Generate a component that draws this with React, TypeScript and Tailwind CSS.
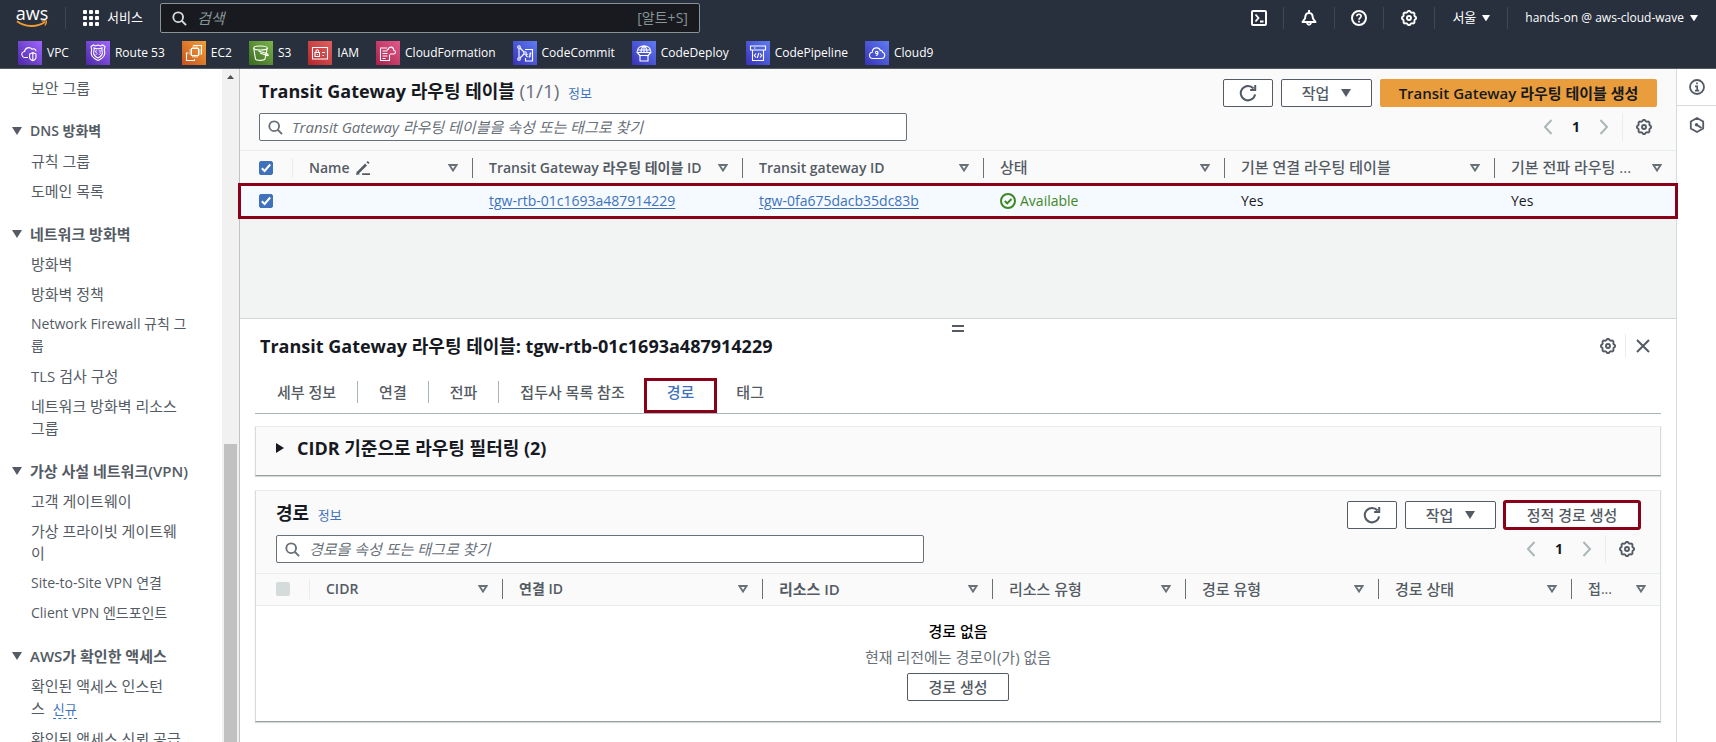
import { useState } from "react";
import type { ReactNode } from "react";

const font = "font-['Open_Sans','Noto_Sans_CJK_KR',sans-serif]";

/* Labels that are mostly Hangul are set one pixel larger than Latin ones. */
function textSize(text: string) {
  const hangul = (text.match(/[가-힣]/g) ?? []).length;
  return hangul / text.length > 0.44 ? "text-[15px]" : "text-sm";
}

function scallop(cx: number, cy: number, r: number, depth: number, teeth: number) {
  const points: string[] = [];
  for (let i = 0; i < 96; i++) {
    const a = (i / 96) * Math.PI * 2;
    const wave = Math.max(-0.7, Math.min(0.7, Math.cos(teeth * a))) / 0.7;
    const rr = r + depth * wave;
    points.push(`${(cx + rr * Math.cos(a)).toFixed(2)} ${(cy + rr * Math.sin(a)).toFixed(2)}`);
  }
  return `M${points.join("L")}Z`;
}
const gearPath = scallop(8, 8, 6.5, 0.55, 8);

function Glyph({ children, className = "size-4" }: { children: ReactNode; className?: string }) {
  return (
    <svg viewBox="0 0 16 16" className={className} fill="none" stroke="currentColor" strokeWidth="2" aria-hidden="true">
      {children}
    </svg>
  );
}
const Gear = () => (
  <Glyph>
    <path d={gearPath} strokeLinejoin="round" strokeWidth="1.9" />
    <circle cx="8" cy="8" r="2" strokeWidth="1.9" />
  </Glyph>
);
const Refresh = () => (
  <Glyph className="size-[18px]">
    <path d="M14.3 9.2A6.4 6.4 0 1 1 12.900 4" strokeWidth="1.8" />
    <path d="M14.400.8v4.600H9.900" strokeWidth="1.8" />
  </Glyph>
);
const Magnifier = ({ className }: { className?: string }) => (
  <Glyph className={className}>
    <circle cx="6.600" cy="6.600" r="5.200" />
    <path d="M10.400 10.400 15 15" />
  </Glyph>
);
const CaretDown = ({ className = "w-2.5" }: { className?: string }) => (
  <svg viewBox="0 0 10 8" className={className} fill="currentColor" aria-hidden="true">
    <path d="M0 0h10L5 8Z" />
  </svg>
);
const SortMark = () => (
  <svg viewBox="0 0 10 8" className="h-2 w-2.5" fill="none" stroke="currentColor" strokeWidth="1.800" aria-hidden="true">
    <path d="M1.400 1h7.200L5 6.600Z" />
  </svg>
);

type Service = { name: string; tile: string; art: ReactNode };
const services: Service[] = [
  {
    name: "VPC",
    tile: "from-[#4d27a8] to-[#a166ff]",
    art: (
      <>
        <path d="M10 16.500H7.200A3 3 0 0 1 6.600 10.500 4.200 4.200 0 0 1 14 8.200 2.600 2.600 0 0 1 18 10.200" />
        <path d="M14.800 11.500 18 13v3.500c0 1.700-1.600 2.600-3.200 3.200-1.600-.6-3.200-1.500-3.200-3.200V13ZM14.800 12v7" />
      </>
    ),
  },
  {
    name: "Route 53",
    tile: "from-[#4d27a8] to-[#a166ff]",
    art: (
      <>
        <path d="M5 5.500 7.500 4 9.500 5 12 4l2.500 1 2-1L19 5.500 18.300 9c2 5-.8 8-6.300 10.500C6.500 17 3.700 14 5.700 9Z" />
        <path d="M8 7c2 .8 6 .8 8 0-.4 2-.4 2 .3 4 .7 3-1.300 4.500-4.300 6-3-1.500-5-3-4.300-6 .7-2 .7-2 .3-4Z" />
        <path d="M11.200 9.800H9.600v1.500c2 0 2 2.200 0 2.200M12.800 9.800h1.800l-1 1.400c1.500.3 1 2.400-.9 2.300" strokeWidth=".8" />
      </>
    ),
  },
  {
    name: "EC2",
    tile: "from-[#c8511b] to-[#f0a03a]",
    art: (
      <>
        <path d="M9.500 7.500h7v7h-7ZM11 7.500v-2M13 7.500v-2M15 7.500v-2M11 16.500v-2M13 16.500v-2M15 16.500v-2M9.500 9h-2M9.500 11h-2M9.500 13h-2M18.500 9h-2M18.500 11h-2M18.500 13h-2" />
        <path d="M11 4.500h8.500v9M6.500 12h-2v7.500h8V18" />
      </>
    ),
  },
  {
    name: "S3",
    tile: "from-[#3b6b22] to-[#7bb34a]",
    art: (
      <>
        <ellipse cx="11.500" cy="7" rx="6.800" ry="2" />
        <path d="M4.700 7l1.800 11c.8 1.800 8.500 1.800 9.500 0L18.300 7M11 12l7 2.500c2 .5 1.500-1-.3-2L9.500 10" />
      </>
    ),
  },
  {
    name: "IAM",
    tile: "from-[#b3242c] to-[#e2605f]",
    art: (
      <>
        <path d="M4.500 6.500h15v11.500h-15ZM7 11.500h4.500v4H7ZM8 11.500V10c0-1.600 2.500-1.600 2.500 0v1.500M14 11.500h3M14.500 14.500H16" />
        <path d="M9.300 13v1" />
      </>
    ),
  },
  {
    name: "CloudFormation",
    tile: "from-[#a8224d] to-[#e4588a]",
    art: (
      <>
        <path d="M13.500 13.500v6h-9V7H11M6.500 10h3.500M6.500 12.500h5M6.500 15h5M6.500 17.500h3" />
        <path d="M14 13h3.500c2.500-.2 2.500-3.500.3-3.700C17.500 5.500 13 5 12 8.500c-1 .2-1.500 1-1 2" />
      </>
    ),
  },
  {
    name: "CodeCommit",
    tile: "from-[#3a30b8] to-[#5f7bf2]",
    art: (
      <>
        <circle cx="6" cy="6" r="1.300" />
        <circle cx="6" cy="18" r="1.300" />
        <circle cx="12" cy="12" r="1.300" />
        <path d="M6 7.500v9M7 7l4 4M11 13l-4 4M12 8.500h7.500V20h-7v-3M14.500 13 13 14.500l1.500 1.500M17 12v4M18 11.500l-2 5" />
      </>
    ),
  },
  {
    name: "CodeDeploy",
    tile: "from-[#3a30b8] to-[#5f7bf2]",
    art: (
      <>
        <path d="M5 11.500C5 2.500 19 2.500 19 11.500ZM12 5v6.500M9 11.500C9 8 10 6 12 5c2 1 3 3 3 6.500M5.500 9h13M5.500 12l3 3M18.500 12l-3 3" />
        <path d="M8 14.500h8V20H8Z" />
      </>
    ),
  },
  {
    name: "CodePipeline",
    tile: "from-[#3a30b8] to-[#5f7bf2]",
    art: (
      <>
        <path d="M4.500 5h15v4h-15ZM6.500 9v10.500h11V9M8 7h1.500" />
        <path d="M10 12.500 8.300 14.500l1.700 2M14 12.500l1.700 2-1.700 2M12.800 12l-1.600 5" />
      </>
    ),
  },
  {
    name: "Cloud9",
    tile: "from-[#3a30b8] to-[#5f7bf2]",
    art: (
      <>
        <path d="M8 17.500c-4.500 0-4.500-6-.8-6.200C7.500 6 14 5.500 15.300 9.500c1.300-.4 2.200.5 2.300 1.800 3 .5 2.800 6-.6 6.200Z" />
        <path d="M13 11.500c0-1.500-2.500-1.500-2.500 0s2.500 1.500 2.500 0c0 2 0 3-2.200 3" />
      </>
    ),
  },
];

const Divider = () => <span className="h-[22px] w-px bg-[#414750]" />;

function Header() {
  return (
    <header className="flex h-[69px] flex-none flex-col border-b border-[#545b64] bg-[#282f3d] text-white">
      <div className="flex h-9 items-center">
        <a href="#home" className="ml-4 flex w-8 flex-col items-center" aria-label="aws home">
          <span className="text-lg leading-[11px] font-medium">aws</span>
          <svg viewBox="0 0 32 9" className="h-[9px] w-8" fill="none" stroke="#f29b33" strokeWidth="2" aria-hidden="true">
            <path d="M1 2.200c8 6 20 6.400 28 .8" />
            <path d="M25.500 2.200c2-.6 4-.7 4.800-.2.400 1-.1 2.600-1.300 4.500" strokeWidth="1.400" />
          </svg>
        </a>
        <span className="ml-[17px] flex">
          <Divider />
        </span>
        <button type="button" className="ml-[17px] flex items-center gap-2 text-[13px]">
          <svg viewBox="0 0 16 16" className="size-4" fill="currentColor" aria-hidden="true">
            {[0, 6, 12].map((y) => [0, 6, 12].map((x) => <rect key={`${x}-${y}`} x={x} y={y} width="4" height="4" rx="1" />))}
          </svg>
          서비스
        </button>
        <label className="ml-[17px] flex h-[30px] w-[540px] items-center gap-2.5 rounded-[2px] border border-[#879596] bg-[#191a1f] px-[11px]">
          <Magnifier className="size-[15px] text-[#d5dbdb]" />
          <input
            type="search"
            aria-label="검색"
            placeholder="검색"
            className="min-w-0 flex-1 bg-transparent text-[15px] italic outline-none placeholder:text-[#879596]"
          />
          <span className="text-sm text-[#879596]">[알트+S]</span>
        </label>
        <div className="ml-auto flex items-center">
          <button type="button" aria-label="CloudShell" className="flex w-12 justify-center">
            <Glyph>
              <rect x="1" y="1" width="14" height="14" rx="1" />
              <path d="m4.500 4.500 3 3.500-3 3.500M9 11.500h3.500" strokeWidth="1.800" />
            </Glyph>
          </button>
          <Divider />
          <button type="button" aria-label="알림" className="flex w-[50px] justify-center">
            <Glyph>
              <path d="M1.500 12h13L12 8.500c-.5-4-1-5.500-4-5.500S4.500 4.500 4 8.500ZM8 0v3" strokeLinejoin="round" />
              <path d="M6 12.500c.3 3 3.700 3 4 0" strokeWidth="1.800" />
            </Glyph>
          </button>
          <Divider />
          <button type="button" aria-label="도움말" className="flex w-12 justify-center">
            <Glyph>
              <circle cx="8" cy="8" r="7" />
              <path d="M5.800 6.300C6 3.500 10.300 3.700 10.100 6.300 10 7.800 8 7.900 8 9.700M8 10.800v1.700" strokeWidth="1.700" />
            </Glyph>
          </button>
          <Divider />
          <button type="button" aria-label="설정" className="flex w-[50px] justify-center">
            <Gear />
          </button>
          <Divider />
          <button type="button" className="flex items-center gap-1.5 px-[17px] text-[13px]">
            서울 <CaretDown className="w-2" />
          </button>
          <Divider />
          <button type="button" className="flex items-center gap-1.5 pr-[18px] pl-[17px] text-xs font-medium">
            hands-on @ aws-cloud-wave <CaretDown className="w-2" />
          </button>
        </div>
      </div>
      <nav aria-label="즐겨찾기" className="flex items-center gap-[17px] px-[18px] pt-[5px]">
        {services.map((s) => (
          <a key={s.name} href={`#${s.name}`} className="flex items-center gap-[5px] text-xs font-medium">
            <span className={`size-6 bg-gradient-to-tr ${s.tile}`}>
              <svg viewBox="0 0 24 24" className="size-6" fill="none" stroke="white" strokeWidth="1.100" aria-hidden="true">
                {s.art}
              </svg>
            </span>
            {s.name}
          </a>
        ))}
      </nav>
    </header>
  );
}

type Group = { title?: string; items: string[][] };
const groups: Group[] = [
  { items: [["보안 그룹"]] },
  { title: "DNS 방화벽", items: [["규칙 그룹"], ["도메인 목록"]] },
  {
    title: "네트워크 방화벽",
    items: [["방화벽"], ["방화벽 정책"], ["Network Firewall 규칙 그", "룹"], ["TLS 검사 구성"], ["네트워크 방화벽 리소스", "그룹"]],
  },
  {
    title: "가상 사설 네트워크(VPN)",
    items: [["고객 게이트웨이"], ["가상 프라이빗 게이트웨", "이"], ["Site-to-Site VPN 연결"], ["Client VPN 엔드포인트"]],
  },
  { title: "AWS가 확인한 액세스", items: [["확인된 액세스 인스턴", "스"], ["확인된 액세스 신뢰 공급"]] },
];

function Sidebar() {
  return (
    <aside className="flex w-[239px] flex-none overflow-hidden bg-white text-[#545b64]">
      <nav aria-label="VPC" className="flex flex-1 flex-col gap-[13px] overflow-hidden pt-2">
        {groups.map((g, i) => (
          <section key={i} className="whitespace-nowrap">
            {g.title && (
              <h2 className={`mb-2 flex items-center gap-2 pl-3 leading-[22px]! font-semibold ${textSize(g.title)}`}>
                <CaretDown /> {g.title}
              </h2>
            )}
            <ul className="flex flex-col">
              {g.items.map((lines) => (
                <li key={lines[0]} className={`mb-2 pl-[31px] leading-[22px]! ${textSize(lines[0])}`}>
                  <a href="#item">
                    {lines.map((l, n) => (
                      <span key={n}>
                        {n > 0 && <br />}
                        {l}
                      </span>
                    ))}
                  </a>
                  {lines[1] === "스" && (
                    <a href="#new" className="ml-2 border-b border-dashed border-[#4072bc] text-[13px] text-[#4072bc]">
                      신규
                    </a>
                  )}
                </li>
              ))}
            </ul>
          </section>
        ))}
      </nav>
      <div className="flex w-[17px] flex-none flex-col items-center bg-[#f1f1f1]">
        <svg viewBox="0 0 7 4" className="mt-1.5 h-1 w-[7px]" fill="#505050" aria-hidden="true">
          <path d="M0 4h7L3.500 0Z" />
        </svg>
        <div className="mt-[365px] w-[13px] flex-1 bg-[#c1c1c1]" />
      </div>
    </aside>
  );
}

function Tick({ label, disabled = false }: { label: string; disabled?: boolean }) {
  const [on, setOn] = useState(!disabled);
  return (
    <label className="relative block size-[14px]">
      <input
        type="checkbox"
        aria-label={label}
        checked={on}
        disabled={disabled}
        onChange={(e) => setOn(e.target.checked)}
        className="block size-[14px] appearance-none rounded-[2px] border border-[#879596] bg-white checked:border-[#4072bc] checked:bg-[#4072bc] disabled:border-[#d5dbdb] disabled:bg-[#d5dbdb]"
      />
      {on && (
        <svg viewBox="0 0 14 14" className="pointer-events-none absolute inset-0 size-[14px]" fill="none" stroke="white" strokeWidth="2" aria-hidden="true">
          <path d="M2.800 7.300 5.600 10 11.200 3.500" />
        </svg>
      )}
    </label>
  );
}

function Button({ children, className = "px-5", label }: { children: ReactNode; className?: string; label?: string }) {
  return (
    <button
      type="button"
      aria-label={label}
      className={`flex h-7 items-center justify-center rounded-[2px] border border-[#545b64] bg-white text-[15px] font-medium text-[#545b64] ${className}`}
    >
      {children}
    </button>
  );
}

const Actions = () => (
  <>
    <Button label="새로 고침" className="w-[50px]">
      <Refresh />
    </Button>
    <Button className="w-[91px] gap-3">
      작업 <CaretDown />
    </Button>
  </>
);

function SearchBox({ text }: { text: string }) {
  return (
    <label className="flex h-7 w-[648px] items-center gap-[9px] rounded-[2px] border border-[#687078] bg-white px-2">
      <Magnifier className="size-[15px] flex-none text-[#687078]" />
      <input
        type="search"
        aria-label={text}
        placeholder={text}
        className="min-w-0 flex-1 bg-transparent text-[15px] italic outline-none placeholder:text-[#687078]"
      />
    </label>
  );
}

function Pager() {
  return (
    <div className="flex h-7 items-center text-[#545b64]">
      <button type="button" aria-label="이전 페이지" className="text-[#aab7b8]">
        <Glyph>
          <path d="M11.500 1 5 8l6.500 7" />
        </Glyph>
      </button>
      <button type="button" className="w-10 text-sm font-bold text-[#16191f]">
        1
      </button>
      <button type="button" aria-label="다음 페이지" className="text-[#aab7b8]">
        <Glyph>
          <path d="M4.500 1 11 8l-6.500 7" />
        </Glyph>
      </button>
      <span className="ml-[10px] h-7 w-px bg-[#eaeded]" />
      <button type="button" aria-label="기본 설정" className="mr-[5px] ml-[13px]">
        <Gear />
      </button>
    </div>
  );
}

function HeadCell({ text, icon, last = false }: { text: string; icon?: ReactNode; last?: boolean }) {
  const weight = /[A-Za-z]/.test(text) ? "font-semibold" : "font-medium";
  return (
    <th scope="col" className={`p-0 text-left whitespace-nowrap ${weight} ${textSize(text)}`}>
      <div className={`flex h-5 items-center gap-2 pr-[14px] pl-4 ${last ? "" : "border-r border-[#687078]"}`}>
        <span className="flex flex-1 items-center gap-1.5">
          {text} {icon}
        </span>
        <button type="button" aria-label="정렬" className="text-[#687078]">
          <SortMark />
        </button>
      </div>
    </th>
  );
}

const Pencil = () => (
  <svg viewBox="0 0 16 16" className="size-[14px]" fill="none" stroke="currentColor" strokeWidth="2" aria-hidden="true">
    <path d="M2 13.500 11.500 4M13 2.500 14.500 1" strokeWidth="3" />
    <path d="M7 15h9" />
    <path d="M0 16 1 11.500l3.500 3.500Z" fill="currentColor" stroke="none" />
  </svg>
);

function TopPanel() {
  return (
    <section className="flex h-[250px] flex-none flex-col border-b border-[#d1d5d5] bg-[#f2f3f3]">
      <div className="border-b border-[#eaeded] bg-[#fafafa] px-[19px] pb-[9px]">
        <div className="flex items-start justify-between">
          <h1 className="pt-2.5 text-lg leading-6 font-bold text-[#16191f]">
            Transit Gateway 라우팅 테이블 <span className="text-[19px] font-normal text-[#687078]">(1/1)</span>{" "}
            <a href="#info" className="ml-1 text-[13px] font-normal text-[#4072bc]">
              정보
            </a>
          </h1>
          <div className="flex gap-2 pt-2.5">
            <Actions />
            <button type="button" className="h-7 w-[277px] rounded-[2px] bg-[#e99d3c] text-[15px] font-semibold text-[#16191f]">
              Transit Gateway 라우팅 테이블 생성
            </button>
          </div>
        </div>
        <div className="mt-1.5 flex justify-between">
          <SearchBox text="Transit Gateway 라우팅 테이블을 속성 또는 태그로 찾기" />
          <Pager />
        </div>
      </div>
      <table className="w-full table-fixed border-collapse text-sm">
        <colgroup>
          <col className="w-[53px]" />
          <col className="w-[180px]" />
          <col className="w-[270px]" />
          <col className="w-[241px]" />
          <col className="w-[241px]" />
          <col className="w-[270px]" />
          <col />
        </colgroup>
        <thead className="bg-[#fafafa] text-[#545b64]">
          <tr className="h-[34px]">
            <th scope="col" className="p-0">
              <div className="flex h-5 items-center border-r border-[#eaeded] pl-[19px]">
                <Tick label="모두 선택" />
              </div>
            </th>
            <HeadCell text="Name" icon={<Pencil />} />
            <HeadCell text="Transit Gateway 라우팅 테이블 ID" />
            <HeadCell text="Transit gateway ID" />
            <HeadCell text="상태" />
            <HeadCell text="기본 연결 라우팅 테이블" />
            <HeadCell text="기본 전파 라우팅 ..." last />
          </tr>
        </thead>
        <tbody>
          <tr className="relative z-10 h-8 bg-[#f4faff] outline-3 -outline-offset-1 outline-[#8a0019]">
            <td className="p-0 pl-[19px]">
              <Tick label="tgw-rtb-01c1693a487914229 선택" />
            </td>
            <td />
            <td className="p-0 pl-4">
              <a href="#rtb" className="text-[#4072bc] underline underline-offset-2">
                tgw-rtb-01c1693a487914229
              </a>
            </td>
            <td className="p-0 pl-4">
              <a href="#tgw" className="text-[#4072bc] underline underline-offset-2">
                tgw-0fa675dacb35dc83b
              </a>
            </td>
            <td className="p-0 pl-4">
              <span className="flex items-center gap-1 text-[#3f8624]">
                <Glyph>
                  <circle cx="8" cy="8" r="7" />
                  <path d="m4.800 8 2.400 2.400L11.500 6" />
                </Glyph>
                Available
              </span>
            </td>
            <td className="p-0 pl-4 text-[#16191f]">Yes</td>
            <td className="p-0 pl-4 text-[#16191f]">Yes</td>
          </tr>
        </tbody>
      </table>
    </section>
  );
}

const tabs = ["세부 정보", "연결", "전파", "접두사 목록 참조", "경로", "태그"];
const routeHeads = ["CIDR", "연결 ID", "리소스 ID", "리소스 유형", "경로 유형", "경로 상태"];
const card = "border border-t-[#eaeded] border-r-[#d5dbdb] border-b-[#95a0a1] border-l-[#d5dbdb] shadow-[0_1px_1px_#d5dbdb]";

function SplitPanel() {
  return (
    <section className="min-h-0 flex-1 bg-white px-[15px]">
      <button type="button" aria-label="패널 크기 조정" className="mx-auto mt-1.5 flex h-[7px] w-3 flex-col justify-between">
        <span className="h-[2px] w-full bg-[#545b64]" />
        <span className="h-[2px] w-full bg-[#545b64]" />
      </button>
      <div className="mt-[2px] flex items-center justify-between pr-2.5 pl-[5px]">
        <h2 className="text-lg leading-6 font-bold text-[#16191f]">Transit Gateway 라우팅 테이블: tgw-rtb-01c1693a487914229</h2>
        <div className="flex items-center text-[#545b64]">
          <button type="button" aria-label="패널 설정">
            <Gear />
          </button>
          <span className="ml-[9px] h-6 w-px bg-[#eaeded]" />
          <button type="button" aria-label="닫기" className="ml-[9px]">
            <Glyph>
              <path d="m2 2 12 12M14 2 2 14" />
            </Glyph>
          </button>
        </div>
      </div>
      <div role="tablist" className="mt-[19px] flex h-[37px] border-b border-[#aab7b8] pl-px text-[15px] font-medium text-[#545b64]">
        {tabs.map((t, i) => (
          <button
            key={t}
            type="button"
            role="tab"
            aria-selected={t === "경로"}
            className={
              t === "경로"
                ? "mt-[3px] h-[31px] px-[21px] pb-1.5 text-[#4072bc] outline-3 -outline-offset-1 outline-[#8a0019]"
                : `my-1 h-[22px] px-[21px] leading-[22px] ${i < 3 ? "border-r border-[#aab7b8]" : ""}`
            }
          >
            {t}
          </button>
        ))}
      </div>
      <div className={`mt-3 flex h-[50px] items-center gap-[13px] bg-[#fafafa] pb-1.5 pl-5 text-[#16191f] ${card}`}>
        <svg viewBox="0 0 8 10" className="h-2.5 w-2" fill="currentColor" aria-hidden="true">
          <path d="M0 0v10l8-5Z" />
        </svg>
        <h3 className="text-lg leading-6 font-bold">CIDR 기준으로 라우팅 필터링 (2)</h3>
      </div>
      <div className={`mt-[14px] ${card}`}>
        <div className="border-b border-[#eaeded] bg-[#fafafa] px-5 pb-[10px]">
          <div className="flex items-start justify-between">
            <h3 className="pt-2.5 text-lg leading-6 font-bold text-[#16191f]">
              경로{" "}
              <a href="#info" className="ml-1 text-[13px] font-normal text-[#4072bc]">
                정보
              </a>
            </h3>
            <div className="flex gap-2 pt-2.5">
              <Actions />
              <Button className="w-[136px] outline-3 -outline-offset-2 outline-[#8a0019]">정적 경로 생성</Button>
            </div>
          </div>
          <div className="mt-1.5 flex justify-between">
            <SearchBox text="경로을 속성 또는 태그로 찾기" />
            <Pager />
          </div>
        </div>
        <table className="w-full table-fixed border-collapse text-sm">
          <colgroup>
            <col className="w-[54px]" />
            <col className="w-[193px]" />
            <col className="w-[260px]" />
            <col className="w-[230px]" />
            <col className="w-[193px]" />
            <col className="w-[193px]" />
            <col className="w-[193px]" />
            <col />
          </colgroup>
          <thead className="border-b border-[#eaeded] bg-[#fafafa] text-[#545b64]">
            <tr className="h-[31px]">
              <th scope="col" className="p-0">
                <div className="flex h-5 items-center border-r border-[#eaeded] pl-5">
                  <Tick label="모든 경로 선택" disabled />
                </div>
              </th>
              {routeHeads.map((h) => (
                <HeadCell key={h} text={h} />
              ))}
              <HeadCell text="접..." last />
            </tr>
          </thead>
          <tbody>
            <tr>
              <td colSpan={8} className="p-0">
                <div className="flex flex-col items-center pt-[14px] pb-5 text-[15px] leading-[22px]">
                  <p className="font-medium text-black">경로 없음</p>
                  <p className="mt-1 text-[#687078]">현재 리전에는 경로이(가) 없음</p>
                  <Button className="mt-[5px] w-[102px]">경로 생성</Button>
                </div>
              </td>
            </tr>
          </tbody>
        </table>
      </div>
    </section>
  );
}

function Rail() {
  return (
    <aside className="flex w-10 flex-none flex-col border-l border-[#d5dbdb] bg-white text-[#545b64]">
      <button type="button" aria-label="정보 패널" className="flex h-[37px] items-center justify-center border-b border-[#d5dbdb]">
        <Glyph>
          <circle cx="8" cy="8" r="7" strokeWidth="1.800" />
          <path d="M8 3.500v1.800M6 7.300h2.200v4M6 11.700h4.200" strokeWidth="1.700" />
        </Glyph>
      </button>
      <button type="button" aria-label="진단" className="flex h-[38px] items-center justify-center">
        <Glyph>
          <path d="M8 1 14.200 4.500v7L8 15l-6.200-3.500v-7Z" strokeWidth="1.800" strokeLinejoin="round" />
          <path d="m8 8 4.500 3" />
          <circle cx="7.500" cy="7.800" r="1.700" fill="currentColor" stroke="none" />
        </Glyph>
      </button>
    </aside>
  );
}

export default function App() {
  return (
    <div lang="ko" className={`flex h-screen flex-col overflow-hidden bg-white ${font}`}>
      <Header />
      <div className="flex min-h-0 flex-1">
        <Sidebar />
        <main className="flex min-w-0 flex-1 flex-col border-l border-[#c0c4c6]">
          <TopPanel />
          <SplitPanel />
        </main>
        <Rail />
      </div>
    </div>
  );
}
